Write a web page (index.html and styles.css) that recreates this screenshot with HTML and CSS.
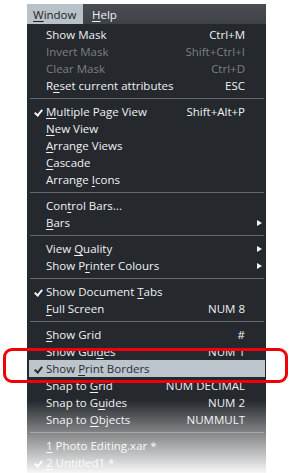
FILE: index.html
```html
<!DOCTYPE html>
<html lang="en">
<head>
    <meta charset="UTF-8">
    <meta name="viewport" content="width=device-width, initial-scale=1.0">
    <title>Window Menu</title>
    <link rel="stylesheet" href="styles.css">
</head>
<body>
    <div class="menu">
        <!-- Menu bar -->
        <div class="menubar">
            <span class="bar-item open"><u>W</u>indow</span>
            <span class="bar-item"><u>H</u>elp</span>
        </div>

        <!-- Drop-down panel -->
        <div class="panel">
            <div class="item"><span class="check"></span><span class="label">Show Mask</span><span class="key">Ctrl+M</span><span></span></div>
            <div class="item disabled"><span class="check"></span><span class="label">Invert Mask</span><span class="key">Shift+Ctrl+I</span><span></span></div>
            <div class="item disabled"><span class="check"></span><span class="label">Clear Mask</span><span class="key">Ctrl+D</span><span></span></div>
            <div class="item"><span class="check"></span><span class="label">R<u>e</u>set current attributes</span><span class="key">ESC</span><span></span></div>
            <div class="sep"></div>

            <div class="item checked"><span class="check"></span><span class="label"><u>M</u>ultiple Page View</span><span class="key">Shift+Alt+P</span><span></span></div>
            <div class="item"><span class="check"></span><span class="label"><u>N</u>ew View</span><span class="key"></span><span></span></div>
            <div class="item"><span class="check"></span><span class="label"><u>A</u>rrange Views</span><span class="key"></span><span></span></div>
            <div class="item"><span class="check"></span><span class="label"><u>C</u>ascade</span><span class="key"></span><span></span></div>
            <div class="item"><span class="check"></span><span class="label">Arrange <u>I</u>cons</span><span class="key"></span><span></span></div>
            <div class="sep"></div>

            <div class="item"><span class="check"></span><span class="label">Con<u>t</u>rol Bars...</span><span class="key"></span><span></span></div>
            <div class="item"><span class="check"></span><span class="label"><u>B</u>ars</span><span class="key"></span><span class="arrow"></span></div>
            <div class="sep"></div>

            <div class="item"><span class="check"></span><span class="label">View <u>Q</u>uality</span><span class="key"></span><span class="arrow"></span></div>
            <div class="item"><span class="check"></span><span class="label">Show P<u>r</u>inter Colours</span><span class="key"></span><span class="arrow"></span></div>
            <div class="sep"></div>

            <div class="item checked"><span class="check"></span><span class="label">Show Document <u>T</u>abs</span><span class="key"></span><span></span></div>
            <div class="item"><span class="check"></span><span class="label"><u>F</u>ull Screen</span><span class="key">NUM 8</span><span></span></div>
            <div class="sep"></div>

            <div class="item"><span class="check"></span><span class="label"><u>S</u>how Grid</span><span class="key">#</span><span></span></div>
            <div class="item"><span class="check"></span><span class="label">Show Gui<u>d</u>es</span><span class="key">NUM 1</span><span></span></div>
            <div class="item checked active"><span class="check"></span><span class="label">Show <u>P</u>rint Borders</span><span class="key"></span><span></span></div>
            <div class="item"><span class="check"></span><span class="label">Snap to <u>G</u>rid</span><span class="key">NUM DECIMAL</span><span></span></div>
            <div class="item"><span class="check"></span><span class="label">Snap to G<u>u</u>ides</span><span class="key">NUM 2</span><span></span></div>
            <div class="item"><span class="check"></span><span class="label">Snap to <u>O</u>bjects</span><span class="key">NUMMULT</span><span></span></div>
            <div class="sep"></div>

            <div class="item"><span class="check"></span><span class="label"><u>1</u> Photo Editing.xar *</span><span class="key"></span><span></span></div>
            <div class="item checked"><span class="check"></span><span class="label"><u>2</u> Untitled1 *</span><span class="key"></span><span></span></div>
        </div>
    </div>

    <!-- Annotation and fade over the screenshot -->
    <div class="callout"></div>
    <div class="fade"></div>
</body>
</html>
```

FILE: styles.css
```css
/* Basic Reset */
* {
    box-sizing: border-box;
    margin: 0;
    padding: 0;
}

body {
    font-family: "Open Sans", "Noto Sans", sans-serif;
    font-size: 11.5px;
    background: #fff;
    width: 290px;
    height: 473px;
    overflow: hidden;
    position: relative;
}

u {
    text-decoration: underline;
    text-underline-offset: 2px;
}

/* Menu frame */
.menu {
    margin: 4px 0 0 27px;
    width: 239px;
}

.menubar {
    display: flex;
    height: 20px;
    background: linear-gradient(#4a4d52, #3e4145);
}

.bar-item {
    display: flex;
    align-items: center;
    padding: 0 6px;
    color: #eef2f6;
}

.bar-item.open {
    width: 56px;
    background: #b9c1c9;
    color: #1c1f22;
    margin-right: 3px;
}

/* Drop-down panel */
.panel {
    background: #25282c;
    padding: 2px 0 4px;
}

.item {
    display: grid;
    grid-template-columns: 19px 1fr auto 21px;
    align-items: center;
    height: 17px;
    color: #eef2f6;
}

.item.disabled {
    color: #7c8084;
}

.item.active {
    background: #bcc4cc;
    color: #2a2d31;
    margin: 0 1px 0 2px;
    grid-template-columns: 17px 1fr auto 20px;
}

.key {
    text-align: right;
    white-space: nowrap;
}

.check {
    height: 17px;
    position: relative;
}

.checked .check::after {
    content: "";
    position: absolute;
    left: 9px;
    top: 5px;
    width: 3px;
    height: 6px;
    border: solid currentColor;
    border-width: 0 2px 2px 0;
    transform: rotate(40deg);
}

.active .check::after {
    left: 7px;
}

.arrow {
    width: 0;
    height: 0;
    margin-left: 12px;
    border-top: 3.5px solid transparent;
    border-bottom: 3.5px solid transparent;
    border-left: 5px solid #f2f4f6;
}

.sep {
    height: 9px;
    margin: 0 2px 0 3px;
    position: relative;
}

.sep::after {
    content: "";
    position: absolute;
    left: 0;
    right: 0;
    top: 4px;
    height: 1px;
    background: #66696d;
}

/* Red annotation box */
.callout {
    position: absolute;
    left: 3px;
    top: 348px;
    width: 285px;
    height: 35px;
    border: 3px solid #f00008;
    border-radius: 9px;
}

/* White fade at the bottom */
.fade {
    position: absolute;
    left: 0;
    right: 0;
    top: 400px;
    height: 73px;
    background: linear-gradient(rgba(255, 255, 255, 0), rgba(255, 255, 255, 0.96));
}
```
